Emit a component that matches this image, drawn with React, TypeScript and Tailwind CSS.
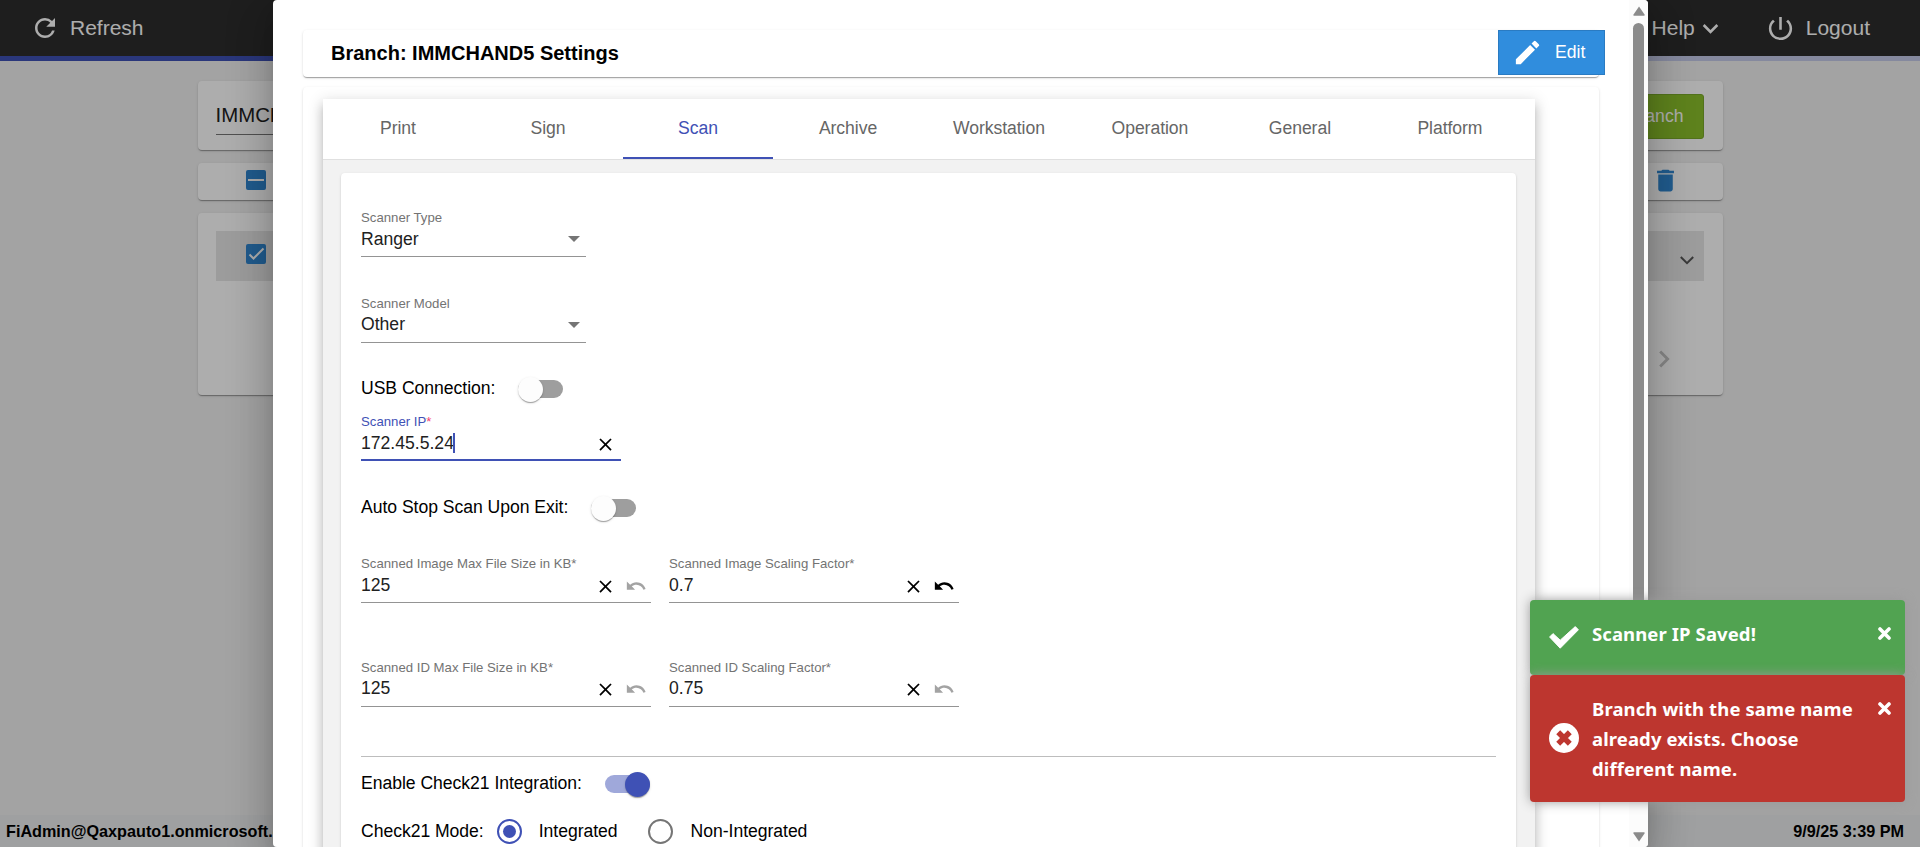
import type { ReactNode } from "react";
import {
  MdChevronRight,
  MdClose,
  MdDelete,
  MdEdit,
  MdExpandMore,
  MdPowerSettingsNew,
  MdRefresh,
} from "react-icons/md";

const cardShadow =
  "shadow-[0_2px_1px_-1px_rgba(0,0,0,0.2),0_1px_1px_0_rgba(0,0,0,0.14),0_1px_3px_0_rgba(0,0,0,0.12)]";

const tabs = ["Print", "Sign", "Scan", "Archive", "Workstation", "Operation", "General", "Platform"];

function CheckBox({ mark }: { mark: string }) {
  return (
    <svg viewBox="0 0 20 20" className="size-5" fill="none" stroke="white" strokeWidth="2">
      <rect width="20" height="20" rx="2" fill="#3087d0" stroke="none" />
      <path d={mark} />
    </svg>
  );
}

function UndoIcon({ className }: { className: string }) {
  return (
    <svg viewBox="0 0 24 24" className={`size-[22px] ${className}`} fill="currentColor">
      <path d="M12.5 8c-2.650 0-5.050.99-6.900 2.600L2 7v9h9l-3.620-3.620c1.390-1.160 3.160-1.880 5.120-1.880 3.540 0 6.550 2.310 7.600 5.500l2.370-.78C21.080 11.030 17.150 8 12.500 8z" />
    </svg>
  );
}

function Toggle({ on = false }: { on?: boolean }) {
  return (
    <div className={`flex h-[18px] w-[45px] items-center rounded-full ${on ? "justify-end bg-[#9fa8da]" : "bg-[#9e9e9e]"}`}>
      <div
        className={`size-[25px] shrink-0 rounded-full shadow-[0_2px_1px_-1px_rgba(0,0,0,0.2),0_1px_1px_0_rgba(0,0,0,0.14),0_1px_3px_0_rgba(0,0,0,0.12)] ${on ? "bg-[#3f51b5]" : "bg-[#fdfdfd]"}`}
      />
    </div>
  );
}

function ToggleRow({ label, on }: { label: string; on?: boolean }) {
  return (
    <div className="flex h-[26px] items-center">
      <span className="mr-[23px] pb-[2px] tracking-[-0.04px]">{label}</span>
      <Toggle on={on} />
    </div>
  );
}

type FieldProps = {
  label: string;
  value: string;
  valueClass?: string;
  canUndo?: boolean;
};

function SelectField({ label, value, valueClass = "" }: FieldProps) {
  return (
    <div className="h-[49px] w-[225px] border-b border-[#949494]">
      <div className="h-[19px] text-[13.2px] leading-[19px] text-[#737373]">{label}</div>
      <div className="flex h-[23px] items-center justify-between text-[17.6px] leading-[23px] text-[#212121]">
        <span className={valueClass}>{value}</span>
        <span className="mr-[6px] border-x-[6.5px] border-t-[6.5px] border-x-transparent border-t-[#757575]" />
      </div>
    </div>
  );
}

function NumberField({ label, value, valueClass = "", canUndo = false }: FieldProps) {
  return (
    <div className="h-[49px] w-[290px] border-b border-[#949494]">
      <div className="h-[19px] text-[13.2px] leading-[19px] text-[#737373]">{label}</div>
      <div className={`flex h-[24px] items-center text-[17.6px] leading-[24px] text-[#212121] ${valueClass}`}>
        <span className="flex-1">{value}</span>
        <MdClose className="mt-[3px] mr-[9px] size-[21px] text-black" />
        <UndoIcon className={`mt-[2px] mr-1 ${canUndo ? "text-black" : "text-[#a3a3a3]"}`} />
      </div>
    </div>
  );
}

function Toast({ color, icon, children }: { color: string; icon: ReactNode; children: ReactNode }) {
  return (
    <div className={`flex w-[375px] rounded-[4px] pt-[19px] pr-[14px] pb-[18px] pl-[19px] text-white shadow-[0_0_12px_#999] ${color}`}>
      <div className="flex w-[43px] items-center">{icon}</div>
      <div className="flex-1 pr-3 text-[18.5px] leading-[30px] font-bold tracking-[0.1px]">{children}</div>
      <svg viewBox="0 0 13 13" className="mt-[8px] size-[13px]" stroke="currentColor" strokeWidth="3.6" strokeLinecap="round">
        <path d="M2 2l9 9M11 2l-9 9" />
      </svg>
    </div>
  );
}

function Page() {
  return (
    <div className="flex h-full flex-col bg-[#f0f0f0]">
      <header className="flex h-14 items-center justify-between bg-[#2d2d2d] text-[21px] text-white">
        <div className="flex items-center pl-[30px]">
          <MdRefresh className="mr-[10px] size-[30px]" />
          Refresh
        </div>
        <div className="flex items-center pr-[50px]">
          Help
          <MdExpandMore className="mr-[39px] size-[31px]" />
          <MdPowerSettingsNew className="mr-[10px] size-[31px]" />
          Logout
        </div>
      </header>
      <div className="flex h-[5px] bg-[#c5cae9]">
        <div className="w-1/2 bg-[#3f51b5]" />
      </div>
      <main className="mt-5 flex w-[1525px] flex-1 flex-col gap-[13px] self-center">
        <section className={`flex h-[69px] items-center justify-between rounded-[4px] bg-white pr-[19px] pl-[18px] ${cardShadow}`}>
          <div className="mt-1 h-[34px] w-[300px] border-b border-[#777] text-[20.400px] leading-[28px] text-[#212121]">IMMCHAND5</div>
          <div className="mt-[2px] rounded-[3px] border border-[#7aa82a] bg-[#8bc02b] px-[19px] text-[17.6px] leading-[43px] text-white">Add Branch</div>
        </section>
        <section className={`flex h-[37px] items-center justify-between rounded-[4px] bg-white pr-[43px] pb-[3px] pl-[48px] ${cardShadow}`}>
          <CheckBox mark="M2 10h16" />
          <MdDelete className="size-[29px] text-[#3087d0]" />
        </section>
        <section className={`h-[182px] rounded-[4px] bg-white pt-[18px] pr-[19px] pl-[18px] ${cardShadow}`}>
          <div className="flex h-[50px] items-center justify-between bg-[#e6e6e6] pr-[10px] pb-[4px] pl-[30px]">
            <CheckBox mark="M3.500 10.500L7.500 14.500L17.500 4.500" />
            <svg viewBox="0 0 14 9" className="mt-3 h-[9px] w-[14px]" fill="none" stroke="#555" strokeWidth="2">
              <path d="M.8 1l6.200 6.200L13.200 1" />
            </svg>
          </div>
          <div className="mt-[61px] flex justify-end pr-[23px]">
            <MdChevronRight className="size-[34px] text-[#c4c4c4]" />
          </div>
        </section>
      </main>
      <footer className="flex h-8 items-center justify-between bg-[#eaecee] px-[6px] pt-[1px] pr-[16px] text-[16.2px] font-bold text-black">
        <span>FiAdmin@Qaxpauto1.onmicrosoft.com</span>
        <span>9/9/25 3:39 PM</span>
      </footer>
    </div>
  );
}

function ScanSettings() {
  return (
    <div className={`flex h-[800px] flex-col rounded-[4px] bg-white px-[20px] pt-[35px] text-[17.6px] text-black ${cardShadow}`}>
      <SelectField label="Scanner Type" value="Ranger" valueClass="pt-[2px]" />
      <div className="h-[37px]" />
      <SelectField label="Scanner Model" value="Other" />
      <div className="h-[33px]" />
      <ToggleRow label="USB Connection:" />
      <div className="mt-[11px] h-[48px] w-[260px] border-b-2 border-[#3f51b5]">
        <div className="h-[18px] text-[13.2px] leading-[18px] text-[#3f51b5]">
          Scanner IP<span className="text-[#f44373]">*</span>
        </div>
        <div className="flex h-[24px] items-center text-[#212121]">
          <span>172.45.5.24</span>
          <span className="-ml-px h-5 w-[2px] bg-[#3f51b5]" />
          <MdClose className="mt-[3px] mr-[5px] ml-auto size-[21px] text-black" />
        </div>
      </div>
      <div className="h-[34px]" />
      <ToggleRow label="Auto Stop Scan Upon Exit:" />
      <div className="mt-[33px] flex gap-[18px]">
        <NumberField label="Scanned Image Max File Size in KB*" value="125" />
        <NumberField label="Scanned Image Scaling Factor*" value="0.7" canUndo />
      </div>
      <div className="mt-[55px] flex gap-[18px]">
        <NumberField label="Scanned ID Max File Size in KB*" value="125" valueClass="-mt-px" />
        <NumberField label="Scanned ID Scaling Factor*" value="0.75" valueClass="-mt-px" />
      </div>
      <div className="mt-[49px] mb-[14px] h-px bg-[#bdbdbd]" />
      <ToggleRow label="Enable Check21 Integration:" on />
      <div className="mt-[21px] flex h-[26px] items-center tracking-[-0.04px]">
        <span className="mr-[13px]">Check21 Mode:</span>
        <span className="mr-[17px] flex size-[25px] items-center justify-center rounded-full border-[2.5px] border-[#3f51b5]">
          <span className="size-[13px] rounded-full bg-[#3f51b5]" />
        </span>
        <span className="mr-[30px]">Integrated</span>
        <span className="mr-[18px] size-[25px] rounded-full border-[2.5px] border-[#757575]" />
        <span>Non-Integrated</span>
      </div>
    </div>
  );
}

function Scrollbar() {
  return (
    <div className="flex w-[19px] flex-col items-center bg-[#fcfcfc] pt-[6px] pb-[5px]">
      <svg viewBox="0 0 12 10" className="h-[10px] w-[12px] shrink-0" fill="#8b8b8b">
        <path d="M6 0.500L11.500 8.500Q12 9.800 11 9.800H1Q0 9.800.5 8.500z" />
      </svg>
      <div className="mt-[7px] h-[700px] w-[11px] rounded-full bg-[#8b8b8b]" />
      <svg viewBox="0 0 12 10" className="mt-auto h-[10px] w-[12px] shrink-0" fill="#8b8b8b">
        <path d="M6 9.500L11.500 1.500Q12 .2 11 .2H1Q0 .2.5 1.500z" />
      </svg>
    </div>
  );
}

function SettingsDialog() {
  return (
    <div className="flex h-full w-[1375px] overflow-hidden rounded-[4px] bg-white">
      <div className="flex-1 pt-[30px] pl-[30px]">
        <div className={`flex h-[47px] w-[1296px] items-start justify-between rounded-[4px] bg-white pl-[28px] ${cardShadow}`}>
          <h1 className="text-[20px] leading-[46px] font-bold text-black">Branch: IMMCHAND5 Settings</h1>
          <button className="-mr-[6px] flex h-[45px] w-[107px] items-center border border-[#2a7bc2] bg-[#308ddd] pl-[13px] text-[17.6px] text-white">
            <MdEdit className="mr-[12px] size-[31px]" />
            Edit
          </button>
        </div>
        <div className={`mt-[10px] h-[900px] w-[1296px] rounded-[4px] bg-white px-[20px] pt-[12px] ${cardShadow}`}>
          <div className="h-[900px] w-[1212px] bg-[#f2f2f2] shadow-[0_5px_5px_-3px_rgba(0,0,0,0.2),0_8px_10px_1px_rgba(0,0,0,0.14),0_3px_14px_2px_rgba(0,0,0,0.12)]">
            <div className="flex h-[61px] border-b border-[#e0e0e0] bg-white">
              {tabs.map((tab) => (
                <div
                  key={tab}
                  className={`flex min-w-[150px] justify-center border-b-2 px-[30px] pt-[1px] text-[17.6px] leading-[57px] tracking-[-0.06px] ${
                    tab === "Scan" ? "border-[#3f51b5] text-[#3f51b5]" : "border-transparent text-[#666]"
                  }`}
                >
                  {tab}
                </div>
              ))}
            </div>
            <div className="pt-[13px] pr-[19px] pl-[18px]">
              <ScanSettings />
            </div>
          </div>
        </div>
      </div>
      <Scrollbar />
    </div>
  );
}

export default function App() {
  return (
    <div className="relative h-[847px] w-[1920px] overflow-hidden font-['Liberation_Sans',Arial,sans-serif]">
      <Page />
      <div className="absolute inset-0 flex bg-black/32 pl-[273px]">
        <div className="h-full rounded-[4px] shadow-[0_11px_15px_-7px_rgba(0,0,0,0.2),0_24px_38px_3px_rgba(0,0,0,0.14),0_9px_46px_8px_rgba(0,0,0,0.12)]">
          <SettingsDialog />
        </div>
      </div>
      <div className="absolute right-[15px] bottom-[45px] flex flex-col font-['Noto_Sans',sans-serif]">
        <Toast
          color="h-[75px] bg-[#51a351]"
          icon={
            <svg viewBox="0 0 30 23" className="-mt-[2px] h-[23px] w-[30px]" fill="white" stroke="white" strokeLinejoin="round">
              <path d="M.6 11L4 7.600L11.200 14.200L26.300.6L29.400 3.800L11.200 22.200z" />
            </svg>
          }
        >
          Scanner IP Saved!
        </Toast>
        <Toast
          color="bg-[#bd362f]"
          icon={
            <svg viewBox="0 0 30 30" className="mb-[2px] size-[30px]">
              <circle cx="15" cy="15" r="15" fill="white" />
              <path d="M9.200 9.200l11.600 11.600M20.800 9.200l-11.600 11.600" stroke="#bd362f" strokeWidth="5.500" />
            </svg>
          }
        >
          Branch with the same name already exists. Choose different name.
        </Toast>
      </div>
    </div>
  );
}
